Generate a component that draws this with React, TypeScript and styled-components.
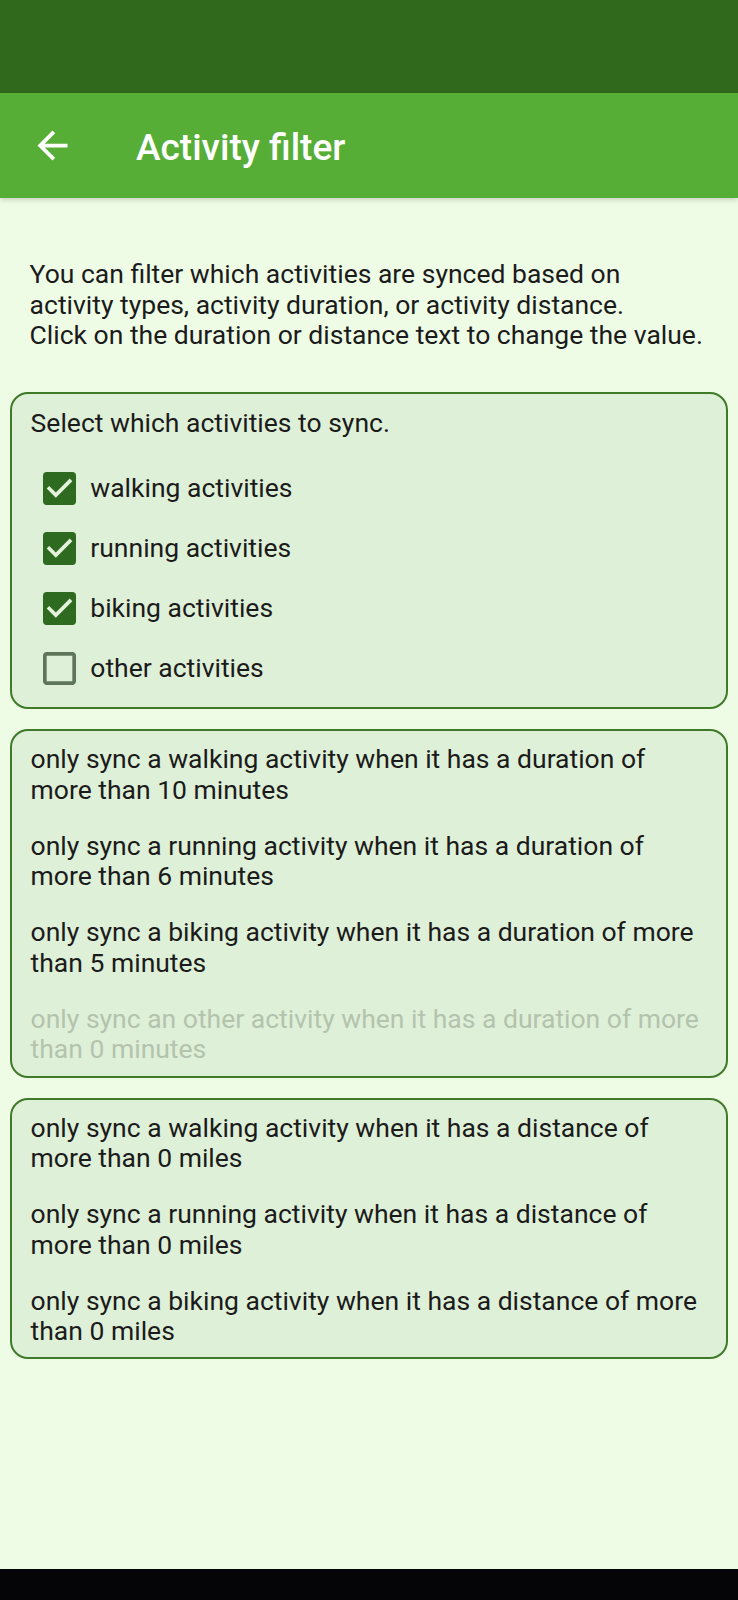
import React from "react";
import styled, { createGlobalStyle } from "styled-components";

const GlobalStyle = createGlobalStyle`
  html, body {
    margin: 0;
    padding: 0;
    background: #eefce6;
  }
  body {
    font-family: Roboto, "Noto Sans", "Liberation Sans", sans-serif;
    -webkit-font-smoothing: antialiased;
  }
  * { box-sizing: border-box; }
`;

const Screen = styled.div`
  display: flex;
  flex-direction: column;
  width: 738px;
  height: 1600px;
  background: #eefce6;
  overflow: hidden;
`;

const StatusBar = styled.div`
  height: 93px;
  flex: none;
  background: #30681c;
`;

const AppBar = styled.header`
  position: relative;
  z-index: 1;
  height: 105px;
  flex: none;
  display: flex;
  align-items: center;
  background: #57ae36;
  box-shadow: 0 2px 5px rgba(0, 0, 0, 0.16);
`;

const BackButton = styled.button`
  display: flex;
  align-items: center;
  justify-content: center;
  width: 45px;
  height: 45px;
  margin-left: 30px;
  padding: 0;
  border: none;
  background: transparent;
  cursor: pointer;
`;

const Title = styled.h1`
  margin: 0 0 0 61px;
  padding-top: 3px;
  font-size: 37px;
  font-weight: 500;
  color: #ffffff;
  letter-spacing: 0;
`;

const Content = styled.main`
  flex: 1;
  display: flex;
  flex-direction: column;
  padding: 61px 10px 0;
`;

const Intro = styled.p`
  margin: 0 0 41px;
  padding: 0 20.6px 0 19.6px;
  font-size: 26.5px;
  line-height: 30.6px;
  color: #1b1b1b;
`;

const Card = styled.section<{ $pad: string; $gap?: number }>`
  display: flex;
  flex-direction: column;
  gap: ${(p) => p.$gap ?? 0}px;
  padding: ${(p) => p.$pad};
  margin-bottom: 20px;
  background: #dff0d8;
  border: 2px solid #3e7a28;
  border-radius: 18px;
`;

const Heading = styled.div`
  font-size: 26.5px;
  line-height: 30.6px;
  color: #1b1b1b;
  margin-bottom: 20px;
`;

const CheckRow = styled.label`
  display: flex;
  align-items: center;
  height: 60px;
  padding-left: 12.7px;
  gap: 14px;
  font-size: 26.5px;
  line-height: 30.6px;
  color: #1b1b1b;
  cursor: pointer;
`;

const Rule = styled.div<{ $disabled?: boolean }>`
  font-size: 26.5px;
  line-height: 30.6px;
  color: ${(p) => (p.$disabled ? "#b3c3ae" : "#1b1b1b")};
`;

const NavBar = styled.div`
  height: 31px;
  flex: none;
  background: #050507;
`;

const BackArrow = () => (
  <svg width="45" height="45" viewBox="0 0 24 24" aria-hidden="true">
    <path
      fill="#ffffff"
      d="M20 11H7.83l5.59-5.59L12 4l-8 8 8 8 1.41-1.41L7.83 13H20v-2z"
    />
  </svg>
);

const CheckBox = ({ checked }: { checked: boolean }) => (
  <svg width="33" height="33" viewBox="3 3 18 18" aria-hidden="true">
    {checked ? (
      <>
        <rect x="3" y="3" width="18" height="18" rx="2" fill="#2e6a1f" />
        <path
          fill="#e4f2dd"
          d="M10 17l-5-5 1.41-1.41L10 14.17l7.59-7.59L19 8l-9 9z"
        />
      </>
    ) : (
      <path
        fill="#5e755a"
        d="M19 5v14H5V5h14m0-2H5c-1.1 0-2 .9-2 2v14c0 1.1.9 2 2 2h14c1.1 0 2-.9 2-2V5c0-1.1-.9-2-2-2z"
      />
    )}
  </svg>
);

const activities = [
  { label: "walking activities", checked: true },
  { label: "running activities", checked: true },
  { label: "biking activities", checked: true },
  { label: "other activities", checked: false },
];

const durationRules = [
  { text: "only sync a walking activity when it has a duration of more than 10 minutes" },
  { text: "only sync a running activity when it has a duration of more than 6 minutes" },
  { text: "only sync a biking activity when it has a duration of more than 5 minutes" },
  { text: "only sync an other activity when it has a duration of more than 0 minutes", disabled: true },
];

const distanceRules = [
  "only sync a walking activity when it has a distance of more than 0 miles",
  "only sync a running activity when it has a distance of more than 0 miles",
  "only sync a biking activity when it has a distance of more than 0 miles",
];

export default function App() {
  return (
    <>
      <GlobalStyle />
      <Screen>
        <StatusBar />
        <AppBar>
          <BackButton aria-label="Back">
            <BackArrow />
          </BackButton>
          <Title>Activity filter</Title>
        </AppBar>
        <Content>
          <Intro>
            You can filter which activities are synced based on activity types,
            activity duration, or activity distance.
            <br />
            Click on the duration or distance text to change the value.
          </Intro>

          <Card $pad="14px 18.6px 8.5px">
            <Heading>Select which activities to sync.</Heading>
            {activities.map((a) => (
              <CheckRow key={a.label}>
                <CheckBox checked={a.checked} />
                {a.label}
              </CheckRow>
            ))}
          </Card>

          <Card $pad="13.5px 18.6px 11px" $gap={25.3}>
            {durationRules.map((r) => (
              <Rule key={r.text} $disabled={r.disabled}>
                {r.text}
              </Rule>
            ))}
          </Card>

          <Card $pad="12.5px 18.6px 10px" $gap={25.4}>
            {distanceRules.map((t) => (
              <Rule key={t}>{t}</Rule>
            ))}
          </Card>
        </Content>
        <NavBar />
      </Screen>
    </>
  );
}
